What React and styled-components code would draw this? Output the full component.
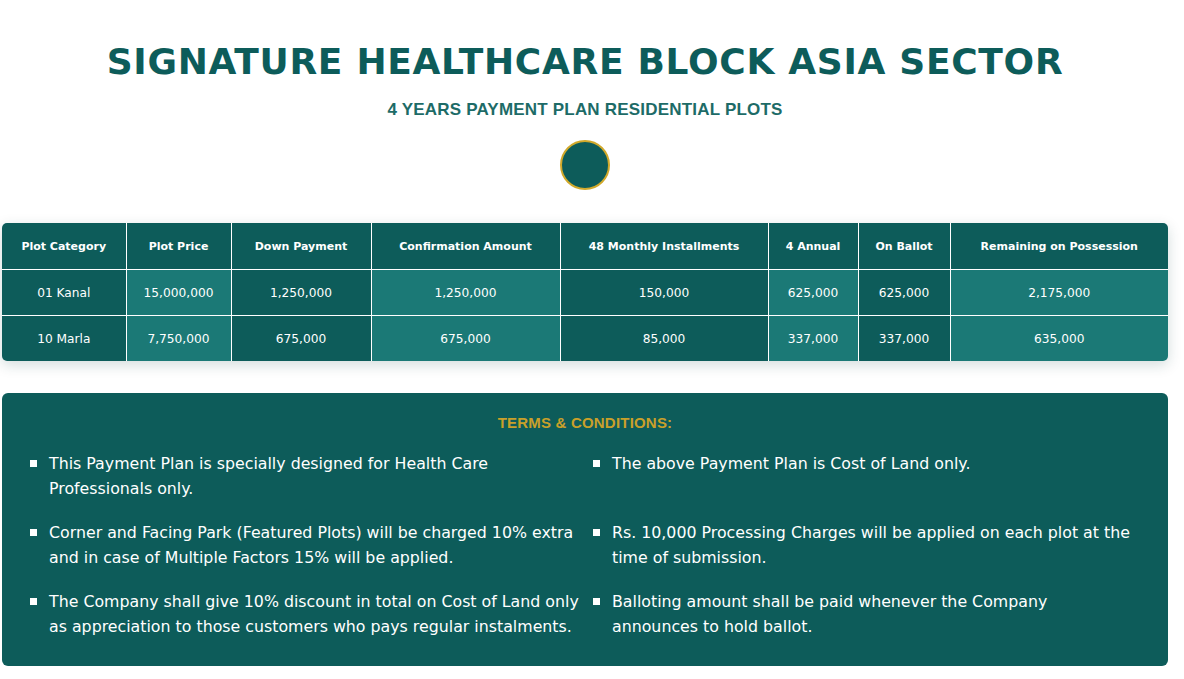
import React from 'react';
import styled, { createGlobalStyle } from 'styled-components';

const GlobalStyle = createGlobalStyle`
    body {
        margin: 0;
        background: #ffffff;
        font-family: "Liberation Sans", Arial, sans-serif;
    }
`;

const columns = [
    { label: 'Plot Category', width: 124 },
    { label: 'Plot Price', width: 105 },
    { label: 'Down Payment', width: 140 },
    { label: 'Confirmation Amount', width: 189 },
    { label: '48 Monthly Installments', width: 208 },
    { label: '4 Annual', width: 90 },
    { label: 'On Ballot', width: 92 },
    { label: 'Remaining on Possession', width: 218 },
];

const rows = [
    ['01 Kanal', '15,000,000', '1,250,000', '1,250,000', '150,000', '625,000', '625,000', '2,175,000'],
    ['10 Marla', '7,750,000', '675,000', '675,000', '85,000', '337,000', '337,000', '635,000'],
];

const terms = [
    'This Payment Plan is specially designed for Health Care Professionals only.',
    'The above Payment Plan is Cost of Land only.',
    'Corner and Facing Park (Featured Plots) will be charged 10% extra and in case of Multiple Factors 15% will be applied.',
    'Rs. 10,000 Processing Charges will be applied on each plot at the time of submission.',
    'The Company shall give 10% discount in total on Cost of Land only as appreciation to those customers who pays regular instalments.',
    'Balloting amount shall be paid whenever the Company announces to hold ballot.',
];

const App = () => {
    return (
        <Page>
            <GlobalStyle />
            <Hero>
                <Title>SIGNATURE HEALTHCARE BLOCK ASIA SECTOR</Title>
                <Subtitle>4 YEARS PAYMENT PLAN RESIDENTIAL PLOTS</Subtitle>
                <Dot />
            </Hero>
            <TableCard>
                <Table>
                    <colgroup>
                        {columns.map((c) => <col key={c.label} style={{ width: c.width }} />)}
                    </colgroup>
                    <thead>
                        <tr>
                            {columns.map((c) => <Th key={c.label}>{c.label}</Th>)}
                        </tr>
                    </thead>
                    <tbody>
                        {rows.map((r) => (
                            <tr key={r[0]}>
                                {r.map((v, i) => <Td key={i} $light={i % 2 === 1}>{v}</Td>)}
                            </tr>
                        ))}
                    </tbody>
                </Table>
            </TableCard>
            <Terms>
                <TermsTitle>TERMS &amp; CONDITIONS:</TermsTitle>
                <TermsList>
                    {terms.map((t) => <Term key={t}>{t}</Term>)}
                </TermsList>
            </Terms>
        </Page>
    );
};

const Page = styled.div`
    width: 1166px;
    margin-left: 2px;
    padding-bottom: 12px;
`;

const Hero = styled.div`
    display: flex;
    flex-direction: column;
    align-items: center;
    padding-top: 40px;
    padding-bottom: 33px;
`;

const Title = styled.h1`
    margin: 0;
    font-family: "DejaVu Sans", sans-serif;
    font-weight: 700;
    font-size: 36px;
    line-height: 44px;
    letter-spacing: 0.7px;
    color: #0d5c5a;
`;

const Subtitle = styled.h2`
    margin: 16px 0 0;
    font-weight: 700;
    font-size: 17px;
    line-height: 20px;
    letter-spacing: 0.2px;
    color: #1d6b67;
`;

const Dot = styled.div`
    width: 46px;
    height: 46px;
    margin-top: 20px;
    border-radius: 50%;
    background: #0d5c5a;
    border: 2px solid #d1a92b;
`;

const TableCard = styled.div`
    border-radius: 5px;
    overflow: hidden;
    box-shadow: 0 4px 14px rgba(13, 60, 60, 0.18);
`;

const Table = styled.table`
    width: 100%;
    border-collapse: collapse;
    table-layout: fixed;
    font-family: "DejaVu Sans", sans-serif;
    color: #ffffff;
    text-align: center;
    th, td {
        border: 1px solid #ffffff;
    }
    tr:first-child th { border-top: none; }
    tr:last-child td { border-bottom: none; }
    th:first-child, td:first-child { border-left: none; }
    th:last-child, td:last-child { border-right: none; }
`;

const Th = styled.th`
    height: 46px;
    padding: 0;
    background: #0d5c5a;
    font-size: 11px;
    font-weight: 700;
`;

const Td = styled.td`
    height: 45px;
    padding: 0;
    background: ${(p) => (p.$light ? '#1b7976' : '#0d5c5a')};
    font-size: 12.2px;
    font-weight: 400;
`;

const Terms = styled.div`
    margin-top: 32px;
    background: #0d5c5a;
    border-radius: 6px;
    padding: 21px 28px 27px 28px;
`;

const TermsTitle = styled.h3`
    margin: 0;
    text-align: center;
    font-size: 15px;
    letter-spacing: 0.2px;
    font-weight: 700;
    color: #c9a02a;
`;

const TermsList = styled.ul`
    list-style: none;
    margin: 20px 0 0;
    padding: 0;
    display: grid;
    grid-template-columns: 563px 540px;
    row-gap: 19px;
`;

const Term = styled.li`
    position: relative;
    padding-left: 19px;
    padding-right: 14px;
    font-family: "DejaVu Sans", sans-serif;
    font-size: 15.8px;
    line-height: 25px;
    color: #ffffff;
    &:nth-child(even) {
        padding-right: 0;
        max-width: 521px;
    }
    &::before {
        content: '';
        position: absolute;
        left: 0;
        top: 9px;
        width: 7px;
        height: 7px;
        background: #ffffff;
    }
`;

export default App;
